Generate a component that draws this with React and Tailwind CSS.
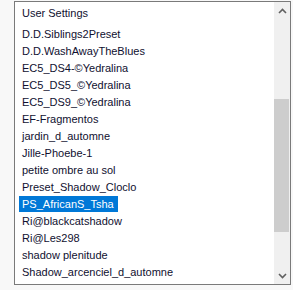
import React from "react";

const items = [
  "D.D.Siblings2Preset",
  "D.D.WashAwayTheBlues",
  "EC5_DS4-\u00A9Yedralina",
  "EC5_DS5_\u00A9Yedralina",
  "EC5_DS9_\u00A9Yedralina",
  "EF-Fragmentos",
  "jardin_d_automne",
  "Jille-Phoebe-1",
  "petite ombre au sol",
  "Preset_Shadow_Cloclo",
  "PS_AfricanS_Tsha",
  "Ri@blackcatshadow",
  "Ri@Les298",
  "shadow plenitude",
  "Shadow_arcenciel_d_automne",
];

function Chevron({ up }) {
  return (
    <svg width="9" height="6" viewBox="0 0 9 6">
      <path
        d={up ? "M1 5 L4.5 1.5 L8 5" : "M1 1 L4.5 4.5 L8 1"}
        fill="none"
        stroke="#606060"
        strokeWidth="1.6"
      />
    </svg>
  );
}

export default function App() {
  return (
    <div
      className="w-[293px] h-[290px] bg-[#f8f8f8] pl-[14px] pt-[1px] overflow-hidden"
      style={{ fontFamily: '"Liberation Sans", Arial, sans-serif' }}
    >
      <div className="w-[277px] h-[284px] border border-[#7a7a7a] bg-white flex">
        <div className="flex-1 overflow-hidden pt-[3px] pl-[4px] text-[11px] text-[#101030]">
          <div className="h-[17px] leading-[17px] pl-[3px] whitespace-nowrap">User Settings</div>
          <div className="mt-[4px] flex flex-col">
            {items.map((t) => {
              const sel = t === "PS_AfricanS_Tsha";
              return (
                <div key={t} className="h-[17px] leading-[17px] whitespace-nowrap">
                  <span
                    className={
                      sel
                        ? "inline-block h-[16px] leading-[16px] pl-[3px] pr-[4px] bg-[#0078d7] text-white"
                        : "inline-block pl-[3px]"
                    }
                  >
                    {t}
                  </span>
                </div>
              );
            })}
          </div>
        </div>
        <div className="w-[16px] bg-[#f0f0f0] flex flex-col">
          <div className="h-[17px] flex items-center justify-center">
            <Chevron up />
          </div>
          <div className="h-[80px]" />
          <div className="h-[133px] bg-[#cdcdcd] mr-[1px]" />
          <div className="flex-1" />
          <div className="h-[17px] flex items-center justify-center">
            <Chevron />
          </div>
        </div>
      </div>
    </div>
  );
}
